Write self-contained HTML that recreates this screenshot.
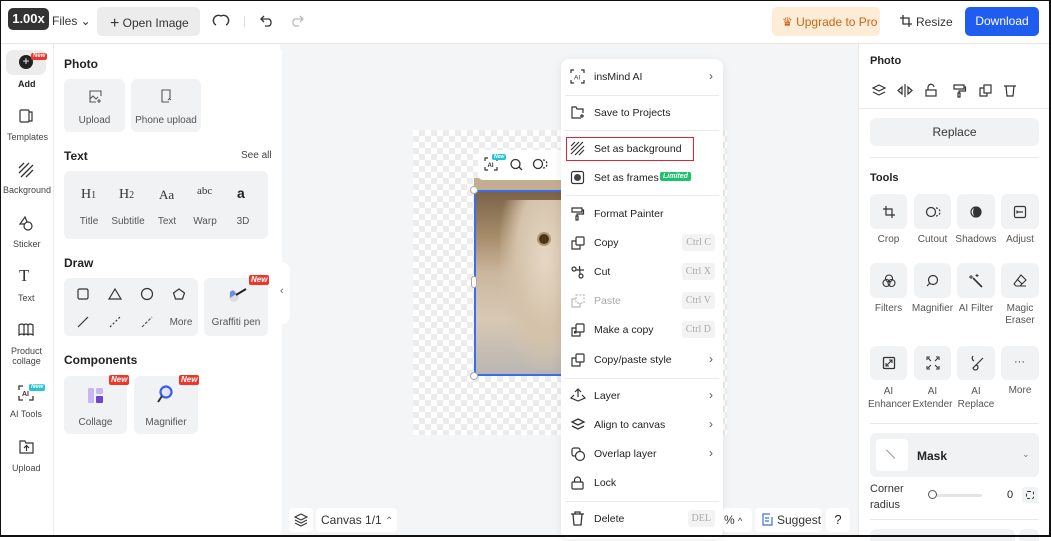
<!DOCTYPE html>
<html><head><meta charset="utf-8"><style>
*{box-sizing:border-box;margin:0;padding:0}
body{width:1051px;height:537px;overflow:hidden;font-family:"Liberation Sans",sans-serif;color:#222;background:#fff;position:relative;font-size:11px}
.a{position:absolute}
.t{position:absolute;white-space:nowrap}
.tile{position:absolute;background:#f1f2f4;border-radius:6px}
.lbl{position:absolute;font-size:10px;color:#555;text-align:center;white-space:nowrap}
.new{position:absolute;background:#f0362b;color:#fff;font-size:8px;font-style:italic;font-weight:bold;padding:0 2px;border-radius:2px;line-height:10px}
.mi{position:absolute;left:561px;width:162px;height:29px}
.mi span{position:absolute;left:33px;top:8px;font-size:10.5px;color:#222}
.mi svg{position:absolute;left:10px;top:7px}
.kb{position:absolute;right:8px;top:5px;background:#f3f3f3;color:#aaa;font-family:"Liberation Serif",serif;font-size:10px;padding:3px 4px;border-radius:3px}
.ch{position:absolute;right:10px;top:6px;color:#555;font-size:12px}
.sep{position:absolute;left:565px;width:154px;height:1px;background:#eaeaea}
.rsep{position:absolute;height:1px;background:#e8e8e8}
svg{overflow:visible}
</style></head><body>
<!-- top bar -->
<div class="a" style="left:0;top:43px;width:1051px;height:1px;background:#e6e6e6"></div>
<div class="a" style="left:8px;top:8px;width:41px;height:22px;background:#333;border-radius:5px;color:#fff;font-weight:bold;font-size:13px;text-align:center;line-height:22px">1.00x</div>
<div class="t" style="left:52px;top:14px;font-size:12px;color:#333">Files ⌄</div>
<div class="a" style="left:97px;top:7px;width:103px;height:29px;background:#ececec;border-radius:5px"></div>
<div class="t" style="left:110px;top:14px;font-size:12px;color:#333"><span style="font-size:16px;position:relative;top:1px">+</span> Open Image</div>
<svg class="a" style="left:213px;top:14px" width="16" height="14"><path d="M3 11 A5 5 0 0 1 8 2 A5 5 0 0 1 13 11" fill="none" stroke="#333" stroke-width="1.4"/></svg>
<div class="a" style="left:244px;top:16px;width:1px;height:11px;background:#ddd"></div>
<svg class="a" style="left:260px;top:14px" width="14" height="13"><path d="M4 2 L1 5 L4 8 M1 5 H9 A4 4 0 0 1 9 12 H5" fill="none" stroke="#333" stroke-width="1.3"/></svg>
<svg class="a" style="left:290px;top:14px" width="14" height="13"><path d="M10 2 L13 5 L10 8 M13 5 H5 A4 4 0 0 0 5 12 H9" fill="none" stroke="#bbb" stroke-width="1.3"/></svg>
<div class="a" style="left:772px;top:7px;width:108px;height:29px;background:#fdecd6;border-radius:5px"></div>
<div class="t" style="left:782px;top:15px;font-size:12px;color:#c8651a">♛ Upgrade to Pro</div>
<svg class="a" style="left:900px;top:15px" width="12" height="12"><path d="M3 0 V9 H12 M0 3 H9 V12" fill="none" stroke="#333" stroke-width="1.3"/></svg>
<div class="t" style="left:916px;top:15px;font-size:12px;color:#333">Resize</div>
<div class="a" style="left:965px;top:7px;width:74px;height:29px;background:#1f5cf0;border-radius:5px;color:#fff;font-size:12px;text-align:center;line-height:29px">Download</div>

<!-- left rail -->
<div class="a" style="left:53px;top:44px;width:1px;height:493px;background:#ececec"></div>
<div class="a" style="left:6px;top:50px;width:40px;height:25px;background:#ececec;border-radius:7px"></div>
<div class="a" style="left:19px;top:55px;width:14px;height:14px;border-radius:50%;background:#222;color:#fff;font-size:12px;line-height:13px;text-align:center">+</div>
<div class="new" style="left:31px;top:53px;font-size:6px;line-height:7px">New</div>
<div class="t" style="left:18px;top:79px;font-size:9px;font-weight:bold">Add</div>
<svg class="a" style="left:19px;top:109px" width="15" height="14"><rect x="1" y="1" width="9" height="12" rx="1" fill="none" stroke="#333" stroke-width="1.2"/><path d="M10 3 H13 V12 H10" fill="none" stroke="#333" stroke-width="1.2"/></svg>
<div class="t" style="left:7px;top:132px;font-size:9px;color:#444">Templates</div>
<svg class="a" style="left:19px;top:163px" width="14" height="14"><path d="M0 5 L5 0 M0 10 L10 0 M2 14 L14 2 M7 14 L14 7" stroke="#333" stroke-width="1.3"/></svg>
<div class="t" style="left:3px;top:185px;font-size:9px;color:#444">Background</div>
<svg class="a" style="left:19px;top:216px" width="15" height="15"><path d="M6 1 L1 8 H9 Z" fill="none" stroke="#333" stroke-width="1.2"/><circle cx="9" cy="10" r="4" fill="#fff" stroke="#333" stroke-width="1.2"/></svg>
<div class="t" style="left:13px;top:239px;font-size:9px;color:#444">Sticker</div>
<div class="t" style="left:19px;top:266px;font-size:17px;font-family:'Liberation Serif',serif;color:#333">T</div>
<div class="t" style="left:18px;top:293px;font-size:9px;color:#444">Text</div>
<svg class="a" style="left:18px;top:323px" width="16" height="13"><path d="M1 2 Q4 0 6 2 Q8 0 10 2 Q12 0 15 2 V12 Q12 10 10 12 Q8 10 6 12 Q4 10 1 12 Z M6 2 V12 M10 2 V12" fill="none" stroke="#333" stroke-width="1.2"/></svg>
<div class="t" style="left:11px;top:346px;font-size:9px;color:#444;text-align:center;line-height:10px">Product<br>collage</div>
<svg class="a" style="left:19px;top:386px" width="14" height="14"><path d="M0 4 V0 H4 M10 0 H14 V4 M14 10 V14 H10 M4 14 H0 V10" fill="none" stroke="#333" stroke-width="1.3"/><text x="3" y="10" font-size="7" font-family="Liberation Sans" font-weight="bold" fill="#333">AI</text></svg>
<div class="new" style="left:29px;top:384px;font-size:6px;line-height:7px;background:#25c3d9">New</div>
<div class="t" style="left:10px;top:409px;font-size:9px;color:#444">AI Tools</div>
<svg class="a" style="left:19px;top:440px" width="15" height="14"><path d="M1 1 H6 L7 3 H14 V13 H1 Z M7.5 11 V6 M5 8 L7.5 5.5 L10 8" fill="none" stroke="#333" stroke-width="1.2"/></svg>
<div class="t" style="left:12px;top:463px;font-size:9px;color:#444">Upload</div>

<!-- canvas area -->
<div class="a" style="left:280px;top:44px;width:578px;height:493px;background:#f4f5f7"></div>
<div class="a" style="left:270px;top:44px;width:12px;height:493px;background:#fff;border-radius:0 10px 10px 0"></div>
<div class="a" style="left:278px;top:262px;width:12px;height:62px;background:#fff;border-radius:0 8px 8px 0"></div>
<div class="t" style="left:280px;top:285px;font-size:11px;color:#666">‹</div>
<div class="a" style="left:858px;top:44px;width:1px;height:493px;background:#e8e8e8"></div>

<!-- checker canvas -->
<div class="a" style="left:413px;top:130px;width:314px;height:305px;background-color:#fff;background-image:linear-gradient(45deg,#ececec 25%,transparent 25%,transparent 75%,#ececec 75%),linear-gradient(45deg,#ececec 25%,transparent 25%,transparent 75%,#ececec 75%);background-size:12px 12px;background-position:0 0,6px 6px"></div>
<div class="a" style="left:474px;top:178px;width:90px;height:16px;background:#c4ae93"></div>
<div class="a" style="left:474px;top:190px;width:90px;height:186px;background:linear-gradient(180deg,#7b6247 0%,#a88d6c 25%,#cbb79f 45%,#d8c8b4 70%,#b9b6b2 100%);border:2px solid #3a6cf0"></div>
<div class="a" style="left:500px;top:200px;width:64px;height:170px;background:radial-gradient(ellipse at 70% 35%,#e6d7c3 0%,#d4c2aa 45%,transparent 75%)"></div>
<div class="a" style="left:537px;top:232px;width:14px;height:14px;border-radius:50%;background:#4a3520;border:2px solid #b09a6a"></div>
<div class="a" style="left:470px;top:186px;width:8px;height:8px;border-radius:50%;background:#fff;border:1px solid #aaa"></div>
<div class="a" style="left:470px;top:372px;width:8px;height:8px;border-radius:50%;background:#fff;border:1px solid #aaa"></div>
<div class="a" style="left:471px;top:276px;width:6px;height:12px;border-radius:3px;background:#fff;border:1px solid #aaa"></div>
<div class="a" style="left:478px;top:150px;width:90px;height:30px;background:#fff;border-radius:5px 0 0 5px"></div>
<svg class="a" style="left:485px;top:158px" width="12" height="12"><path d="M0 3 V0 H3 M9 0 H12 V3 M12 9 V12 H9 M3 12 H0 V9" fill="none" stroke="#333" stroke-width="1.2"/><text x="2.5" y="9" font-size="6" font-weight="bold" font-family="Liberation Sans" fill="#333">AI</text></svg>
<div class="new" style="left:492px;top:154px;font-size:5px;line-height:6px;background:#25c3d9">New</div>
<svg class="a" style="left:510px;top:158px" width="12" height="12"><circle cx="5.5" cy="6" r="4.5" fill="none" stroke="#333" stroke-width="1.3"/><path d="M9 9 L12 12" stroke="#333" stroke-width="1.3"/></svg>
<svg class="a" style="left:533px;top:158px" width="14" height="12"><circle cx="5" cy="6" r="4.5" fill="none" stroke="#333" stroke-width="1.3"/><path d="M10 2 A4 4 0 0 1 10 10" fill="none" stroke="#333" stroke-width="1.3" stroke-dasharray="2 1.5"/></svg>

<!-- context menu -->
<div class="a" style="left:561px;top:59px;width:162px;height:480px;background:#fff;border-radius:8px;box-shadow:0 2px 10px rgba(0,0,0,.08)"></div>
<div class="mi" style="top:63px"><svg width="13" height="13"><path d="M0 3 V0 H3 M10 0 H13 V3 M13 10 V13 H10 M3 13 H0 V10" fill="none" stroke="#333" stroke-width="1.2"/><text x="3" y="9.5" font-size="6.5" font-family="Liberation Sans" fill="#333">AI</text></svg><span>insMind AI</span><div class="ch">›</div></div>
<div class="sep" style="top:95px"></div>
<div class="mi" style="top:99px"><svg width="14" height="13"><path d="M10 12 H1 V1 H5 L6 3 H12 V7 M11 8 V12 M9 10 H13" fill="none" stroke="#333" stroke-width="1.2"/></svg><span>Save to Projects</span></div>
<div class="sep" style="top:130px"></div>
<div class="a" style="left:566px;top:137px;width:128px;height:24px;border:1.5px solid #e0262a"></div>
<div class="mi" style="top:135px"><svg width="13" height="13"><path d="M0 4 L4 0 M0 8 L8 0 M0 12 L12 0 M4 13 L13 4 M8 13 L13 8" stroke="#333" stroke-width="1.2"/></svg><span>Set as background</span></div>
<div class="mi" style="top:164px"><svg width="13" height="13"><rect x="0.5" y="0.5" width="12" height="12" rx="2" fill="none" stroke="#333" stroke-width="1.2"/><circle cx="6.5" cy="6.5" r="3.5" fill="#444"/></svg><span>Set as frames</span><div class="a" style="left:99px;top:8px;background:#1bc46a;color:#fff;font-size:7px;font-weight:bold;font-style:italic;padding:1px 3px;border-radius:2px">Limited</div></div>
<div class="sep" style="top:195px"></div>
<div class="mi" style="top:200px"><svg width="13" height="14"><path d="M1 1 H11 V5 H1 Z M11 3 H12.5 V7 H6 V9 M5 9 H7 V13 H5 Z" fill="none" stroke="#333" stroke-width="1.2"/></svg><span>Format Painter</span></div>
<div class="mi" style="top:229px"><svg width="14" height="14"><rect x="5" y="1" width="8" height="8" rx="1" fill="none" stroke="#333" stroke-width="1.2"/><path d="M5 5 H1 V13 H9 V9" fill="none" stroke="#333" stroke-width="1.2"/></svg><span>Copy</span><div class="kb">Ctrl C</div></div>
<div class="mi" style="top:258px"><svg width="14" height="14"><circle cx="3" cy="4" r="2" fill="none" stroke="#333" stroke-width="1.2"/><circle cx="10" cy="11" r="2" fill="none" stroke="#333" stroke-width="1.2"/><path d="M5 5 L13 5 M8.5 1 L9 9" stroke="#333" stroke-width="1.2"/></svg><span>Cut</span><div class="kb">Ctrl X</div></div>
<div class="mi" style="top:287px"><svg width="14" height="14"><rect x="5" y="1" width="8" height="8" fill="none" stroke="#bbb" stroke-width="1.2" stroke-dasharray="2 1.5"/><path d="M5 5 H1 V13 H9 V9" fill="none" stroke="#bbb" stroke-width="1.2"/></svg><span style="color:#aaa">Paste</span><div class="kb">Ctrl V</div></div>
<div class="mi" style="top:316px"><svg width="14" height="14"><rect x="5" y="1" width="8" height="8" rx="1" fill="none" stroke="#333" stroke-width="1.2"/><path d="M5 5 H1 V13 H9 V9" fill="none" stroke="#333" stroke-width="1.2"/><rect x="3" y="8" width="2.5" height="2.5" fill="#333"/></svg><span>Make a copy</span><div class="kb">Ctrl D</div></div>
<div class="mi" style="top:346px"><svg width="14" height="14"><rect x="5" y="1" width="8" height="8" rx="1" fill="none" stroke="#333" stroke-width="1.2"/><path d="M5 5 H1 V13 H9 V9" fill="none" stroke="#333" stroke-width="1.2"/></svg><span>Copy/paste style</span><div class="ch">›</div></div>
<div class="sep" style="top:378px"></div>
<div class="mi" style="top:382px"><svg width="14" height="13"><path d="M7 0 V8 M4 3 L7 0 L10 3 M3 6 L0 9 L7 12 L14 9 L11 6" fill="none" stroke="#333" stroke-width="1.2"/></svg><span>Layer</span><div class="ch">›</div></div>
<div class="mi" style="top:411px"><svg width="14" height="13"><path d="M7 1 L13 4 L7 7 L1 4 Z M1 8 L7 11 L13 8" fill="none" stroke="#333" stroke-width="1.3"/></svg><span>Align to canvas</span><div class="ch">›</div></div>
<div class="mi" style="top:440px"><svg width="14" height="14"><rect x="1" y="1" width="8" height="8" rx="2" fill="none" stroke="#333" stroke-width="1.2"/><circle cx="9" cy="9" r="4.5" fill="#fff" stroke="#333" stroke-width="1.2"/></svg><span>Overlap layer</span><div class="ch">›</div></div>
<div class="mi" style="top:469px"><svg width="13" height="14"><rect x="1" y="6" width="11" height="7" rx="1" fill="none" stroke="#333" stroke-width="1.2"/><path d="M3.5 6 V4 A3 3 0 0 1 9.5 4 V6" fill="none" stroke="#333" stroke-width="1.2"/></svg><span>Lock</span></div>
<div class="sep" style="top:501px"></div>
<div class="mi" style="top:505px"><svg width="13" height="14"><path d="M0 2 H13 M4 2 V0 H9 V2 M2 2 L3 13 H10 L11 2" fill="none" stroke="#333" stroke-width="1.3"/></svg><span>Delete</span><div class="kb">DEL</div></div>

<!-- bottom controls -->
<div class="a" style="left:289px;top:508px;width:24px;height:24px;background:#fff;border-radius:4px"></div>
<svg class="a" style="left:294px;top:513px" width="14" height="14"><path d="M7 1 L13 4 L7 7 L1 4 Z M1 7 L7 10 L13 7 M1 10 L7 13 L13 10" fill="none" stroke="#333" stroke-width="1.1"/></svg>
<div class="a" style="left:316px;top:508px;width:81px;height:24px;background:#fff;border-radius:4px"></div>
<div class="t" style="left:321px;top:513px;font-size:12px;color:#333">Canvas 1/1 <span style="font-size:10px;color:#666">⌃</span></div>
<div class="a" style="left:723px;top:508px;width:29px;height:24px;background:#fff;border-radius:4px"></div>
<div class="t" style="left:724px;top:513px;font-size:12px;color:#333">% <span style="font-size:9px">^</span></div>
<div class="a" style="left:755px;top:508px;width:67px;height:24px;background:#fff;border-radius:4px"></div>
<svg class="a" style="left:762px;top:513px" width="12" height="13"><path d="M10 4 V12 H1 V1 H8 M3 5 H7 M3 8 H7" fill="none" stroke="#3a6cf0" stroke-width="1.2"/></svg>
<div class="t" style="left:777px;top:513px;font-size:12px;color:#333">Suggest</div>
<div class="a" style="left:826px;top:508px;width:24px;height:24px;background:#fff;border-radius:4px;text-align:center;line-height:24px;font-size:13px">?</div>

<!-- left panel -->
<div class="t" style="left:64px;top:57px;font-size:12px;font-weight:bold">Photo</div>
<div class="tile" style="left:64px;top:79px;width:61px;height:53px"></div>
<svg class="a" style="left:89px;top:90px" width="13" height="13"><path d="M12 6 V1 H1 V12 H7 M1 9 L4 6 L7 9 L9 7 M10 9 V13 M8 11 H12" fill="none" stroke="#555" stroke-width="1.1"/></svg>
<div class="lbl" style="left:64px;top:115px;width:61px">Upload</div>
<div class="tile" style="left:131px;top:79px;width:70px;height:53px"></div>
<svg class="a" style="left:161px;top:89px" width="11" height="14"><path d="M8 13 H1 V1 H9 V9 M7 11 L8.5 9.5 L10 11" fill="none" stroke="#555" stroke-width="1.1"/></svg>
<div class="lbl" style="left:131px;top:115px;width:70px">Phone upload</div>
<div class="t" style="left:64px;top:149px;font-size:12px;font-weight:bold">Text</div>
<div class="t" style="left:241px;top:150px;font-size:10px;color:#444">See all</div>
<div class="tile" style="left:64px;top:171px;width:204px;height:68px"></div>
<div class="t" style="left:81px;top:187px;font-family:'Liberation Serif',serif;font-size:14px;color:#333">H<span style="font-size:10px">1</span></div>
<div class="t" style="left:119px;top:187px;font-family:'Liberation Serif',serif;font-size:14px;color:#333">H<span style="font-size:10px">2</span></div>
<div class="t" style="left:159px;top:187px;font-family:'Liberation Serif',serif;font-size:13px;color:#333">Aa</div>
<div class="t" style="left:197px;top:185px;font-family:'Liberation Serif',serif;font-size:11px;color:#333">abc</div>
<div class="t" style="left:237px;top:185px;font-size:14px;font-weight:bold;color:#222">a</div>
<div class="lbl" style="left:74px;top:216px;width:30px">Title</div>
<div class="lbl" style="left:110px;top:216px;width:36px">Subtitle</div>
<div class="lbl" style="left:152px;top:216px;width:30px">Text</div>
<div class="lbl" style="left:190px;top:216px;width:30px">Warp</div>
<div class="lbl" style="left:228px;top:216px;width:30px">3D</div>
<div class="t" style="left:64px;top:256px;font-size:12px;font-weight:bold">Draw</div>
<div class="tile" style="left:64px;top:278px;width:134px;height:58px"></div>
<svg class="a" style="left:77px;top:288px" width="115" height="42"><rect x="1" y="1" width="10" height="10" rx="1.5" fill="none" stroke="#333" stroke-width="1.2"/><path d="M38 1 L44 11 H32 Z" fill="none" stroke="#333" stroke-width="1.2"/><circle cx="70" cy="6" r="5.5" fill="none" stroke="#333" stroke-width="1.2"/><path d="M102 1 L107.5 5 L105.5 11 H98.5 L96.5 5 Z" fill="none" stroke="#333" stroke-width="1.2"/><path d="M1 39 L11 29" stroke="#333" stroke-width="1.2"/><path d="M33 39 L43 29" stroke="#333" stroke-width="1.2" stroke-dasharray="2 2"/><path d="M65 39 L75 29" stroke="#555" stroke-width="1.2" stroke-dasharray="3 1.5"/></svg>
<div class="lbl" style="left:166px;top:317px;width:30px">More</div>
<div class="tile" style="left:204px;top:278px;width:64px;height:58px"></div>
<div class="new" style="left:249px;top:275px">New</div>
<svg class="a" style="left:226px;top:286px" width="22" height="18"><circle cx="8" cy="11" r="5" fill="#ddd"/><path d="M4 6 Q8 2 10 8 L4 12 Z" fill="#6a8be8"/><path d="M10 9 L20 3" stroke="#222" stroke-width="2"/></svg>
<div class="lbl" style="left:204px;top:317px;width:64px">Graffiti pen</div>
<div class="t" style="left:64px;top:353px;font-size:12px;font-weight:bold">Components</div>
<div class="tile" style="left:64px;top:376px;width:63px;height:58px"></div>
<div class="new" style="left:109px;top:375px">New</div>
<svg class="a" style="left:87px;top:387px" width="17" height="17"><rect x="1" y="1" width="6" height="15" rx="1" fill="#c8b6f2"/><rect x="9" y="1" width="7" height="6" rx="1" fill="#c8b6f2"/><rect x="9" y="9" width="7" height="7" rx="1" fill="#6b45d8"/></svg>
<div class="lbl" style="left:64px;top:417px;width:63px">Collage</div>
<div class="tile" style="left:134px;top:376px;width:64px;height:58px"></div>
<div class="new" style="left:179px;top:375px">New</div>
<svg class="a" style="left:157px;top:385px" width="16" height="19"><circle cx="9" cy="7" r="5.5" fill="#dfe6ff" stroke="#3a5ee8" stroke-width="2.2"/><path d="M5 11 L1 17" stroke="#333" stroke-width="2"/></svg>
<div class="lbl" style="left:134px;top:417px;width:64px">Magnifier</div>

<!-- right panel -->
<div class="t" style="left:870px;top:55px;font-size:11px;font-weight:bold">Photo</div>
<svg class="a" style="left:872px;top:84px" width="145" height="13"><g fill="none" stroke="#333" stroke-width="1.2"><path d="M7 1 L13 4 L7 7 L1 4 Z M1 8 L7 11 L13 8"/><path d="M33 0 V13 M30 3 L26 6.5 L30 10 Z M36 3 L40 6.5 L36 10 Z"/><rect x="54" y="6" width="10" height="6"/><path d="M56 6 V3.5 A3 3 0 0 1 62 3"/><path d="M82 1 H92 V5 H82 Z M92 3 H93.5 V7 H87 V9 M86 9 H88 V13 H86 Z"/><rect x="112" y="1" width="7" height="8"/><path d="M112 4 H108 V12 H115 V9"/><path d="M132 2 H144 M134 2 L135 12 H141 L142 2"/></g></svg>
<div class="rsep" style="left:859px;top:108px;width:190px"></div>
<div class="a" style="left:870px;top:118px;width:169px;height:28px;background:#f1f2f4;border-radius:6px;text-align:center;line-height:28px;font-size:12px;color:#333">Replace</div>
<div class="rsep" style="left:870px;top:157px;width:169px"></div>
<div class="t" style="left:870px;top:172px;font-size:11px;font-weight:bold">Tools</div>

<div class="tile" style="left:870px;top:194px;width:37px;height:35px"></div>
<div class="tile" style="left:914px;top:194px;width:37px;height:35px"></div>
<div class="tile" style="left:957px;top:194px;width:38px;height:35px"></div>
<div class="tile" style="left:1001px;top:194px;width:38px;height:35px"></div>
<svg class="a" style="left:883px;top:206px" width="12" height="12"><path d="M3 0 V9 H12 M0 3 H9 V12" fill="none" stroke="#333" stroke-width="1.2"/></svg>
<svg class="a" style="left:926px;top:206px" width="14" height="12"><circle cx="5" cy="6" r="4.5" fill="none" stroke="#333" stroke-width="1.2"/><path d="M10 2 A4 4 0 0 1 10 10" fill="none" stroke="#333" stroke-width="1.2" stroke-dasharray="2 1.5"/></svg>
<svg class="a" style="left:970px;top:206px" width="12" height="12"><circle cx="6" cy="6" r="5" fill="none" stroke="#333" stroke-width="1.2"/><path d="M6 1 A5 5 0 0 1 6 11 A3 5 0 0 1 6 1" fill="#333"/></svg>
<svg class="a" style="left:1014px;top:206px" width="12" height="12"><rect x="0.5" y="0.5" width="11" height="11" rx="1.5" fill="none" stroke="#333" stroke-width="1.2"/><path d="M3 6 H9 M3 4.5 V7.5" stroke="#333" stroke-width="1.2"/></svg>
<div class="lbl" style="left:868px;top:234px;width:41px">Crop</div>
<div class="lbl" style="left:912px;top:234px;width:41px">Cutout</div>
<div class="lbl" style="left:955px;top:234px;width:42px">Shadows</div>
<div class="lbl" style="left:999px;top:234px;width:42px">Adjust</div>

<div class="tile" style="left:870px;top:263px;width:37px;height:35px"></div>
<div class="tile" style="left:914px;top:263px;width:37px;height:35px"></div>
<div class="tile" style="left:957px;top:263px;width:38px;height:35px"></div>
<div class="tile" style="left:1001px;top:263px;width:38px;height:35px"></div>
<svg class="a" style="left:882px;top:274px" width="14" height="14"><g fill="none" stroke="#333" stroke-width="1.1"><circle cx="7" cy="4.5" r="3.5"/><circle cx="4.5" cy="9" r="3.5"/><circle cx="9.5" cy="9" r="3.5"/></g></svg>
<svg class="a" style="left:926px;top:274px" width="13" height="13"><circle cx="7" cy="6" r="4.5" fill="none" stroke="#333" stroke-width="1.2"/><path d="M4 9 L1 12" stroke="#333" stroke-width="1.2"/></svg>
<svg class="a" style="left:969px;top:274px" width="14" height="14"><path d="M4 4 L13 13" stroke="#333" stroke-width="1.6"/><path d="M2 1 V5 M0 3 H4 M8 0 V3 M6.5 1.5 H9.5" stroke="#333" stroke-width="1"/></svg>
<svg class="a" style="left:1013px;top:274px" width="14" height="13"><path d="M8 1 L13 6 L7 12 H3 L1 10 Z M4 5 L9 10 M3 12 H13" fill="none" stroke="#333" stroke-width="1.1"/></svg>
<div class="lbl" style="left:868px;top:303px;width:41px">Filters</div>
<div class="lbl" style="left:910px;top:303px;width:45px">Magnifier</div>
<div class="lbl" style="left:955px;top:303px;width:42px">AI Filter</div>
<div class="lbl" style="left:999px;top:303px;width:42px;line-height:12px">Magic<br>Eraser</div>

<div class="tile" style="left:870px;top:346px;width:37px;height:34px"></div>
<div class="tile" style="left:914px;top:346px;width:37px;height:34px"></div>
<div class="tile" style="left:957px;top:346px;width:38px;height:34px"></div>
<div class="tile" style="left:1001px;top:346px;width:38px;height:34px"></div>
<svg class="a" style="left:883px;top:357px" width="12" height="12"><rect x="0.5" y="0.5" width="11" height="11" rx="1" fill="none" stroke="#333" stroke-width="1.3"/><path d="M3 9 L9 3 M6 3 H9 V6 M3 6 V9 H6" fill="none" stroke="#333" stroke-width="1.1"/></svg>
<svg class="a" style="left:927px;top:357px" width="12" height="12"><path d="M0 3 V0 H3 M9 0 H12 V3 M12 9 V12 H9 M3 12 H0 V9 M1 1 L4 4 M11 1 L8 4 M1 11 L4 8 M11 11 L8 8" fill="none" stroke="#333" stroke-width="1.1"/></svg>
<svg class="a" style="left:970px;top:355px" width="14" height="15"><path d="M3 1 Q1 4 4 6 M13 3 L6 10 M6 10 A2.5 2.5 0 1 1 3 13 Z" fill="none" stroke="#333" stroke-width="1.2"/></svg>
<div class="t" style="left:1014px;top:356px;font-size:11px;color:#333">···</div>
<div class="lbl" style="left:868px;top:385px;width:41px;line-height:13px">AI<br>Enhancer</div>
<div class="lbl" style="left:910px;top:385px;width:45px;line-height:13px">AI<br>Extender</div>
<div class="lbl" style="left:955px;top:385px;width:42px;line-height:13px">AI<br>Replace</div>
<div class="lbl" style="left:999px;top:385px;width:42px">More</div>

<div class="rsep" style="left:870px;top:423px;width:169px"></div>
<div class="a" style="left:870px;top:433px;width:169px;height:44px;background:#f1f2f4;border-radius:6px"></div>
<div class="a" style="left:876px;top:439px;width:32px;height:32px;background:#fff;border-radius:4px"></div>
<div class="a" style="left:890px;top:448px;width:1px;height:12px;background:#999;transform:rotate(-45deg)"></div>
<div class="t" style="left:917px;top:449px;font-size:12px;font-weight:bold">Mask</div>
<div class="t" style="left:1022px;top:449px;font-size:9px;color:#777">⌄</div>
<div class="t" style="left:870px;top:481px;font-size:11px;color:#333;line-height:16px">Corner<br>radius</div>
<div class="a" style="left:932px;top:494px;width:50px;height:3px;background:#e4e4e4;border-radius:2px"></div>
<div class="a" style="left:928px;top:490px;width:9px;height:9px;border-radius:50%;background:#fff;border:1.3px solid #555"></div>
<div class="t" style="left:1007px;top:489px;font-size:11px">0</div>
<div class="a" style="left:1022px;top:487px;width:16px;height:16px;background:#f1f2f4;border-radius:3px"></div>
<div class="a" style="left:1026px;top:491px;width:8px;height:8px;border:1.2px dashed #333;border-radius:2px"></div>
<div class="rsep" style="left:870px;top:519px;width:169px"></div>
<div class="a" style="left:870px;top:529px;width:145px;height:12px;background:#f1f2f4;border-radius:6px 6px 0 0"></div>
<div class="a" style="left:1019px;top:529px;width:20px;height:12px;background:#f1f2f4;border-radius:6px 6px 0 0"></div>

<!-- frame border -->
<div class="a" style="left:0;top:0;width:1051px;height:537px;border:1px solid #111;border-right-width:2px;border-bottom-width:2px;pointer-events:none"></div>
</body></html>
